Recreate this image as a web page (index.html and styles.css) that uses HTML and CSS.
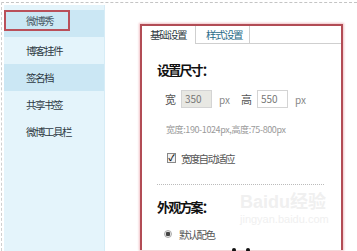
FILE: index.html
```html
<!DOCTYPE html>
<html>
<head>
<meta charset="utf-8">
<link rel="stylesheet" href="styles.css">
</head>
<body>
<div class="frame">
  <nav class="side">
    <div class="item hl"><span class="mark">微博秀</span></div>
    <div class="item">博客挂件</div>
    <div class="item hl">签名档</div>
    <div class="item">共享书签</div>
    <div class="item">微博工具栏</div>
  </nav>
  <main class="panel">
    <div class="tabs">
      <div class="tab active">基础设置</div>
      <div class="tab">样式设置</div>
      <div class="tabfill"></div>
    </div>
    <div class="body">
      <h3 class="title t1">设置尺寸：</h3>
      <div class="size">
        <span class="lab">宽</span>
        <span class="inp dis">350</span>
        <span class="px">px</span>
        <span class="lab lab2">高</span>
        <span class="inp">550</span>
        <span class="px">px</span>
      </div>
      <div class="hint">宽度:190-1024px,高度:75-800px</div>
      <div class="check"><span class="box">✓</span><span>宽度自动适应</span></div>
      <div class="sep"></div>
      <h3 class="title t2">外观方案：</h3>
      <div class="radio"><span class="dot"></span><span>默认配色</span></div>
      <div class="swatch"><span class="bd"></span><span class="bd"></span></div>
    </div>
    <div class="wm"><div class="wm1">Baidu经验</div><div class="wm2">jingyan.baidu.com</div></div>
  </main>
</div>
</body>
</html>
```

FILE: styles.css
```css
* { box-sizing: border-box; }
html, body { margin: 0; padding: 0; background: #fff; }
body {
  width: 357px; height: 251px; overflow: hidden;
  font-family: "Noto Sans CJK SC", "Liberation Sans", sans-serif;
  font-size: 10px; color: #333;
  padding-top: 2px; padding-left: 1px;
}
.frame {
  display: flex;
  align-items: flex-start;
  height: 249px;
  border-top: 1px dashed #c4c4c4;
  border-left: 1px dashed #cfcfcf;
}
.side {
  margin-left: 2px;
  margin-top: 2px;
  width: 101px;
  height: 246px;
  background: #e4f4fb;
  border-right: 1px solid #d6ecf6;
}
.item {
  height: 27px;
  line-height: 27px;
  padding-left: 22px;
  color: #2e3a44;
  font-size: 10.5px;
  letter-spacing: -1.5px;
  white-space: nowrap;
}
.item.hl { background: #cbe7f4; }
.mark {
  display: block;
  margin-left: -22px;
  margin-top: 5px;
  width: 66px;
  height: 21px;
  line-height: 17px;
  padding-left: 20px;
  border: 2px solid #b9505a;
  color: #4a5a66;
}
.panel {
  position: relative;
  margin-left: 35px;
  margin-top: 21px;
  width: 203px;
  height: 226px;
  border: 2px solid #b24c55;
  border-bottom: none;
  box-shadow: 0 0 2px 1px #f1c2c6;
}
.tabs { display: flex; height: 18px; }
.tab {
  height: 18px;
  line-height: 17px;
  font-size: 10.5px;
  letter-spacing: -1.5px;
  white-space: nowrap;
  color: #2f3a40;
}
.tab.active { width: 53px; padding-left: 8px; }
.tab + .tab {
  width: 55px;
  border-left: 1px solid #cfcfcf;
  border-right: 1px solid #cfcfcf;
  border-bottom: 1px solid #cfcfcf;
  color: #2a6c88;
  padding-left: 10px;
}
.tabfill { flex: 1; border-bottom: 1px solid #cfcfcf; }
.body { padding-left: 15px; }
.title {
  margin: 0;
  font-size: 13px;
  font-weight: bold;
  line-height: 20px;
  letter-spacing: -1.8px;
  color: #111;
}
.t1 { margin-top: 16px; }
.size {
  display: flex;
  align-items: center;
  margin-top: 10px;
  padding-left: 8px;
  height: 18px;
  color: #666;
}
.lab { font-size: 11px; color: #555; }
.lab2 { margin-left: 11px; }
.inp {
  width: 31px; height: 18px;
  margin-left: 5px;
  border: 1px solid #d4d4d4;
  background: #fff;
  font-size: 10px; line-height: 16px;
  padding-left: 3px;
  color: #777;
}
.inp.dis { background: #e8e8e3; }
.px { margin-left: 7px; font-size: 10px; color: #888; }
.hint {
  margin-top: 14px;
  padding-left: 9px;
  font-size: 9px;
  line-height: 16px;
  color: #9a9a9a;
  white-space: nowrap;
  letter-spacing: -0.4px;
}
.check {
  display: flex; align-items: center;
  margin-top: 12px;
  padding-left: 10px;
  height: 16px;
  color: #555;
  font-size: 10.5px;
  letter-spacing: -1.7px;
}
.box {
  width: 9px; height: 10px;
  margin-right: 5px;
  border: 1px solid #888;
  background: #f2f2f2;
  font-size: 9px; line-height: 8px;
  letter-spacing: 0;
  text-align: center; color: #222; font-weight: bold;
}
.sep {
  margin-top: 18px;
  width: 167px;
  border-top: 1px dotted #bbb;
}
.t2 { margin-top: 12px; }
.radio {
  display: flex; align-items: center;
  margin-top: 9px;
  padding-left: 7px;
  height: 16px;
  color: #555;
  font-size: 10.5px;
  letter-spacing: -1.7px;
}
.dot {
  width: 8px; height: 8px;
  margin-right: 7px;
  border-radius: 50%;
  border: 1px solid #aaa;
  background: radial-gradient(circle, #444 0 2px, #e6e6e6 2.5px);
}
.swatch { display: flex; margin-top: 6px; padding-left: 75px; gap: 10px; }
.bd { width: 4px; height: 4px; border-radius: 50%; background: #111; }
.wm {
  position: absolute;
  left: 98px; top: 165px;
  color: #f0f0f0;
  pointer-events: none;
  white-space: nowrap;
  font-family: "Liberation Sans", "Noto Sans CJK SC", sans-serif;
}
.wm1 { font-size: 18px; font-weight: bold; line-height: 22px; }
.wm2 { font-size: 11px; line-height: 13px; }
```
